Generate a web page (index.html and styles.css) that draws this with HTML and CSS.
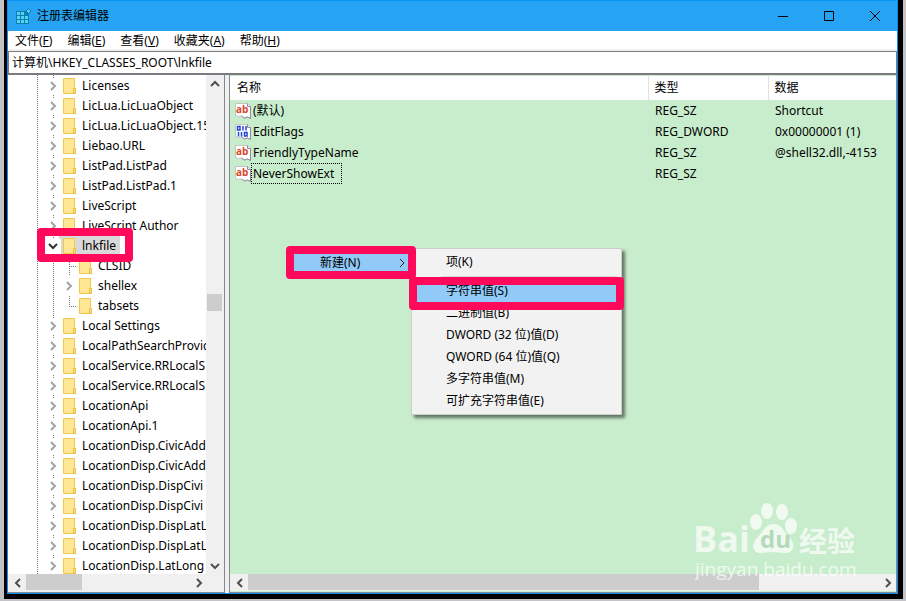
FILE: index.html
```html
<!DOCTYPE html>
<html lang="zh-CN">
<head>
    <meta charset="UTF-8">
    <meta name="viewport" content="width=device-width, initial-scale=1.0">
    <title>注册表编辑器</title>
    <link rel="stylesheet" href="styles.css">
</head>
<body>
    <svg width="0" height="0" class="defs">
        <symbol id="folder" viewBox="0 0 14 17">
            <path d="M.5 .5h11v15H.5z" fill="#ffe694" stroke="#efc94e"/>
            <path d="M10.500 10.500h2v5h-2z" fill="#ffe08a" stroke="#e9bd3d"/>
        </symbol>
        <symbol id="chev" viewBox="0 0 10 10">
            <path d="M3 1l4 4-4 4" fill="none" stroke="currentColor" stroke-width="2"/>
        </symbol>
        <symbol id="page" viewBox="0 0 16 16">
            <path d="M.5 .5h12l3 3v12l-3-1.500-3 1-3-2-3 .5-3-1z" fill="#fff" stroke="#c4c4c4"/>
            <path d="M12.500 .5v3h3v12l-3-1.500-3 1-3-2" fill="none" stroke="#8c8c98"/>
        </symbol>
    </svg>

    <div class="window">
        <header class="titlebar">
            <svg class="app-icon" width="16" height="16" viewBox="0 0 16 16">
                <path d="M0 3h13v13H0z" fill="#117fae"/>
                <path d="M1 4h3v3H1zM5 4h3v3H5zM1 8h3v3H1zM5 8h3v3H5zM9 8h3v3H9zM1 12h3v3H1zM5 12h3v3H5zM9 12h3v3H9z" fill="#55d3f5"/>
                <path d="M12.500 .5l2.500 2.500-2.500 2.500L10 3z" fill="#55c8f0" stroke="#117fae"/>
            </svg>
            <h1>注册表编辑器</h1>
            <button class="win-btn" aria-label="最小化"><svg width="10" height="10"><path d="M0 5.500h10" stroke="#000"/></svg></button>
            <button class="win-btn" aria-label="最大化"><svg width="10" height="10"><path d="M.5 .5h9v9h-9z" fill="none" stroke="#000"/></svg></button>
            <button class="win-btn" aria-label="关闭"><svg width="10" height="10"><path d="M0 0l10 10M10 0L0 10" stroke="#000"/></svg></button>
        </header>

        <nav class="menubar">
            <button>文件(<u>F</u>)</button>
            <button>编辑(<u>E</u>)</button>
            <button>查看(<u>V</u>)</button>
            <button>收藏夹(<u>A</u>)</button>
            <button>帮助(<u>H</u>)</button>
        </nav>

        <input class="address" type="text" aria-label="地址" value="计算机\HKEY_CLASSES_ROOT\lnkfile">

        <main class="split">
            <section class="tree-pane">
                <div class="tree-view">
                    <ul class="tree">
                        <li><button class="toggle" aria-label="展开"><svg><use href="#chev"/></svg></button><svg class="folder"><use href="#folder"/></svg><span>Licenses</span></li>
                        <li><button class="toggle" aria-label="展开"><svg><use href="#chev"/></svg></button><svg class="folder"><use href="#folder"/></svg><span>LicLua.LicLuaObject</span></li>
                        <li><button class="toggle" aria-label="展开"><svg><use href="#chev"/></svg></button><svg class="folder"><use href="#folder"/></svg><span>LicLua.LicLuaObject.15</span></li>
                        <li><button class="toggle" aria-label="展开"><svg><use href="#chev"/></svg></button><svg class="folder"><use href="#folder"/></svg><span>Liebao.URL</span></li>
                        <li><button class="toggle" aria-label="展开"><svg><use href="#chev"/></svg></button><svg class="folder"><use href="#folder"/></svg><span>ListPad.ListPad</span></li>
                        <li><button class="toggle" aria-label="展开"><svg><use href="#chev"/></svg></button><svg class="folder"><use href="#folder"/></svg><span>ListPad.ListPad.1</span></li>
                        <li><button class="toggle" aria-label="展开"><svg><use href="#chev"/></svg></button><svg class="folder"><use href="#folder"/></svg><span>LiveScript</span></li>
                        <li><button class="toggle" aria-label="展开"><svg><use href="#chev"/></svg></button><svg class="folder"><use href="#folder"/></svg><span>LiveScript Author</span></li>
                        <li class="selected"><button class="toggle open" aria-label="折叠"><svg><use href="#chev"/></svg></button><svg class="folder"><use href="#folder"/></svg><span>lnkfile</span><i class="mark mark-key"></i></li>
                        <li class="child"><i class="branch"></i><svg class="folder"><use href="#folder"/></svg><span>CLSID</span></li>
                        <li class="child"><button class="toggle" aria-label="展开"><svg><use href="#chev"/></svg></button><svg class="folder"><use href="#folder"/></svg><span>shellex</span></li>
                        <li class="child"><i class="branch last"></i><svg class="folder"><use href="#folder"/></svg><span>tabsets</span></li>
                        <li><button class="toggle" aria-label="展开"><svg><use href="#chev"/></svg></button><svg class="folder"><use href="#folder"/></svg><span>Local Settings</span></li>
                        <li><button class="toggle" aria-label="展开"><svg><use href="#chev"/></svg></button><svg class="folder"><use href="#folder"/></svg><span>LocalPathSearchProvider</span></li>
                        <li><button class="toggle" aria-label="展开"><svg><use href="#chev"/></svg></button><svg class="folder"><use href="#folder"/></svg><span>LocalService.RRLocalS</span></li>
                        <li><button class="toggle" aria-label="展开"><svg><use href="#chev"/></svg></button><svg class="folder"><use href="#folder"/></svg><span>LocalService.RRLocalS</span></li>
                        <li><button class="toggle" aria-label="展开"><svg><use href="#chev"/></svg></button><svg class="folder"><use href="#folder"/></svg><span>LocationApi</span></li>
                        <li><button class="toggle" aria-label="展开"><svg><use href="#chev"/></svg></button><svg class="folder"><use href="#folder"/></svg><span>LocationApi.1</span></li>
                        <li><button class="toggle" aria-label="展开"><svg><use href="#chev"/></svg></button><svg class="folder"><use href="#folder"/></svg><span>LocationDisp.CivicAdd</span></li>
                        <li><button class="toggle" aria-label="展开"><svg><use href="#chev"/></svg></button><svg class="folder"><use href="#folder"/></svg><span>LocationDisp.CivicAdd</span></li>
                        <li><button class="toggle" aria-label="展开"><svg><use href="#chev"/></svg></button><svg class="folder"><use href="#folder"/></svg><span>LocationDisp.DispCivi</span></li>
                        <li><button class="toggle" aria-label="展开"><svg><use href="#chev"/></svg></button><svg class="folder"><use href="#folder"/></svg><span>LocationDisp.DispCivi</span></li>
                        <li><button class="toggle" aria-label="展开"><svg><use href="#chev"/></svg></button><svg class="folder"><use href="#folder"/></svg><span>LocationDisp.DispLatL</span></li>
                        <li><button class="toggle" aria-label="展开"><svg><use href="#chev"/></svg></button><svg class="folder"><use href="#folder"/></svg><span>LocationDisp.DispLatL</span></li>
                        <li><button class="toggle" aria-label="展开"><svg><use href="#chev"/></svg></button><svg class="folder"><use href="#folder"/></svg><span>LocationDisp.LatLong</span></li>
                    </ul>
                    <div class="vscroll">
                        <button class="up" aria-label="向上"><svg><use href="#chev"/></svg></button>
                        <div class="track"><div class="thumb"></div></div>
                        <button class="down" aria-label="向下"><svg><use href="#chev"/></svg></button>
                    </div>
                </div>
                <div class="hscroll">
                    <button class="left" aria-label="向左"><svg><use href="#chev"/></svg></button>
                    <div class="track"><div class="thumb"></div></div>
                    <button aria-label="向右"><svg><use href="#chev"/></svg></button>
                </div>
            </section>

            <section class="list-pane">
                <div class="list-view">
                    <table>
                        <thead>
                            <tr><th class="col-name">名称</th><th class="col-type">类型</th><th class="col-data">数据</th></tr>
                        </thead>
                        <tbody>
                            <tr>
                                <td><div class="name"><svg width="16" height="16"><use href="#page"/><text class="ab" x="1" y="10">ab</text></svg><span>(默认)</span></div></td>
                                <td>REG_SZ</td><td>Shortcut</td>
                            </tr>
                            <tr>
                                <td><div class="name"><svg width="16" height="16"><use href="#page"/><path d="M2.500 2.500h2.500v3.500H2.500zM8 2v4.500M11 2v4.500M3.500 8v4.500M6.500 8v4.500M9.500 8.500H12V12H9.500z" fill="none" stroke="#2346d8" stroke-width="1.500"/></svg><span>EditFlags</span></div></td>
                                <td>REG_DWORD</td><td>0x00000001 (1)</td>
                            </tr>
                            <tr>
                                <td><div class="name"><svg width="16" height="16"><use href="#page"/><text class="ab" x="1" y="10">ab</text></svg><span>FriendlyTypeName</span></div></td>
                                <td>REG_SZ</td><td>@shell32.dll,-4153</td>
                            </tr>
                            <tr>
                                <td><div class="name"><svg width="16" height="16"><use href="#page"/><text class="ab" x="1" y="10">ab</text></svg><span class="focused">NeverShowExt</span></div></td>
                                <td>REG_SZ</td><td></td>
                            </tr>
                        </tbody>
                    </table>
                </div>
                <div class="hscroll">
                    <button class="left" aria-label="向左"><svg><use href="#chev"/></svg></button>
                    <div class="track"><div class="thumb"></div></div>
                    <button aria-label="向右"><svg><use href="#chev"/></svg></button>
                </div>

                <div class="submenu">
                    <button>项(K)</button>
                    <hr>
                    <button class="active">字符串值(S)<i class="mark mark-string"></i></button>
                    <button>二进制值(B)</button>
                    <button>DWORD (32 位)值(D)</button>
                    <button>QWORD (64 位)值(Q)</button>
                    <button>多字符串值(M)</button>
                    <button>可扩充字符串值(E)</button>
                </div>
                <button class="new-item mark">新建(N)<svg width="8" height="8" viewBox="0 0 8 8"><path d="M2 0l4 4-4 4" fill="none" stroke="#222"/></svg></button>

                <svg class="watermark" width="166" height="80" viewBox="0 0 166 80">
                    <text class="wm-bai" x="-2" y="50">Bai</text>
                    <ellipse cx="61" cy="20" rx="6" ry="8"/>
                    <ellipse cx="72" cy="9" rx="6" ry="8"/>
                    <ellipse cx="87" cy="10" rx="6" ry="8"/>
                    <ellipse cx="96" cy="24" rx="6" ry="8"/>
                    <path d="M79 22c8 0 9 7 14 12 8 7 7 17-3 17-5 0-7-1-12-1s-8 1-12 1c-9 0-10-9-4-15s8-14 17-14z"/>
                    <text class="wm-du" x="65" y="46">du</text>
                    <text class="wm-cn" x="104" y="50">经验</text>
                    <text class="wm-url" x="0" y="74">jingyan.baidu.com</text>
                </svg>
            </section>
        </main>
    </div>
</body>
</html>
```
FILE: styles.css
```css
* { box-sizing: border-box; }
body {
    margin: 0;
    height: 100vh;
    padding: 0 3px 2px 4px;
    background: #c3c3c6;
    font: 12px/20px "Noto Sans", "Noto Sans CJK SC", sans-serif;
    color: #000;
    overflow: hidden;
}
button { border: 0; padding: 0; margin: 0; background: none; font: inherit; color: inherit; }
.defs { position: absolute; }

.window {
    height: 100%;
    display: flex;
    flex-direction: column;
    background: #f0f0f0;
    border: solid #000;
    border-width: 0 5px 5px 3px;
    box-shadow: inset 0 0 0 1px #0a8ff0;
    padding: 0 1px 1px;
}

/* title */
.titlebar {
    display: flex;
    align-items: center;
    flex: 0 0 31px;
    padding-left: 8px;
    background: #26a4f3;
    border-top: 1px solid #0795fa;
}
.titlebar h1 { flex: 1; margin: 0 0 0 5px; font-size: 12px; font-weight: normal; }
.win-btn { width: 46px; height: 30px; display: flex; align-items: center; justify-content: center; }
.win-btn svg { display: block; }
.win-btn:last-child { width: 45px; }

.menubar { display: flex; gap: 15px; flex: 0 0 18px; min-height: 0; background: #fff; padding-left: 7px; }
.menubar button { line-height: 20px; }

.address {
    flex: 0 0 24px;
    width: 100%;
    margin-top: 2px;
    padding: 0 3px;
    border: 1px solid #7a7a80;
    border-bottom-width: 2px;
    border-radius: 0;
    background: #fff;
    font: inherit;
}

.split { flex: 1; min-height: 0; display: flex; gap: 4px; }

/* tree */
.tree-pane {
    flex: 0 0 217px;
    min-width: 0;
    display: flex;
    flex-direction: column;
    border-right: 1px solid #828790;
    border-bottom: 1px solid #828790;
    padding: 0 1px 1px 0;
}
.tree-view { flex: 1; min-width: 0; min-height: 0; display: flex; background: #fff; }
.tree {
    flex: 1;
    min-width: 0;
    margin: 0;
    padding: 1px 0 0 37px;
    list-style: none;
    overflow: hidden;
    background:
        repeating-linear-gradient(#777 0 1px, transparent 1px 2px) 29px 0 / 1px 100% no-repeat,
        repeating-linear-gradient(#777 0 1px, transparent 1px 2px) 45px 0 / 1px 100% no-repeat;
}
.tree li { position: relative; display: flex; align-items: center; height: 20px; white-space: nowrap; }
.toggle { flex: 0 0 16px; height: 15px; display: flex; align-items: center; justify-content: center; background: #fff; color: #a3a3a3; }
.toggle svg { width: 10px; height: 10px; }
.toggle.open { color: #333; }
.toggle.open svg { transform: rotate(90deg); }
.folder { flex: 0 0 14px; height: 17px; margin: 0 5px 0 2px; }
.tree .child { padding-left: 16px; }
.branch {
    flex: 0 0 16px;
    height: 20px;
    background:
        repeating-linear-gradient(#777 0 1px, transparent 1px 2px) 8px 0 / 1px 100% no-repeat,
        repeating-linear-gradient(90deg, #777 0 1px, transparent 1px 2px) 8px 10px / 8px 1px no-repeat;
}
.branch.last {
    background:
        repeating-linear-gradient(#777 0 1px, transparent 1px 2px) 8px 0 / 1px 10px no-repeat,
        repeating-linear-gradient(90deg, #777 0 1px, transparent 1px 2px) 8px 10px / 8px 1px no-repeat;
}
.selected { background: linear-gradient(#d9d9d9, #d9d9d9) 14px 0 / 61px 20px no-repeat; }

/* red frames */
.mark { border: 8px solid #ff0a5a; border-radius: 4px; }
.mark-key { position: absolute; left: -8px; top: -8px; width: 96px; height: 34px; z-index: 1; }
.mark-string { position: absolute; left: -5px; top: -3px; right: -5px; height: 33px; z-index: 1; }

/* scroll bars */
.vscroll { flex: 0 0 17px; display: flex; flex-direction: column; background: #f0f0f0; }
.vscroll .track { flex: 1; display: grid; grid-template-rows: 202fr 17px 246fr; }
.vscroll .thumb { grid-row: 2; margin-left: 1px; background: #cdcdcd; }
.vscroll button, .hscroll button { flex: 0 0 17px; display: flex; align-items: center; justify-content: center; color: #505050; }
.vscroll button svg, .hscroll button svg { width: 10px; height: 10px; }
.up svg { transform: rotate(-90deg); }
.down svg { transform: rotate(90deg); }
.left svg { transform: rotate(180deg); }
.hscroll { flex: 0 0 17px; display: flex; background: #f0f0f0; padding-left: 1px; }
.hscroll .track { flex: 1; }
.hscroll .thumb { height: 16px; background: #cdcdcd; }
.tree-pane .hscroll .thumb { width: 56px; }
.vscroll .thumb { width: 15px; }
.tree-pane .hscroll { padding-right: 16px; }
.list-pane .hscroll .thumb { width: 81%; }

/* values */
.list-pane {
    position: relative;
    flex: 1;
    min-width: 0;
    display: flex;
    flex-direction: column;
    border: 1px solid #828790;
    border-top: 0;
    padding: 1px 0;
    background: #c8edcc;
}
.list-view { flex: 1; min-height: 0; }
table { width: 100%; border-collapse: collapse; table-layout: fixed; }
th { height: 24px; padding: 0 6px; background: #fff; text-align: left; font-weight: normal; border-left: 1px solid #e2e2e2; }
th:first-child { border-left: 0; padding-left: 7px; }
.col-type { width: 120px; }
.col-data { width: 128px; }
td { height: 21px; padding: 0 0 0 7px; white-space: nowrap; }
td:first-child { padding-left: 5px; }
.name { display: flex; align-items: center; }
.name span { padding: 0 1px; border: 1px solid transparent; line-height: 19px; }
.name .focused { padding-right: 7px; border: 1px dotted #000; }
.ab { font: bold 10px "Open Sans", sans-serif; fill: #d8472b; }

/* context menu */
.submenu {
    position: absolute;
    left: 181px;
    top: 173px;
    width: 211px;
    padding: 2px;
    background: #f2f2f2;
    border: 1px solid #ccc;
    box-shadow: 3px 3px 3px rgba(0, 0, 0, .5);
}
.submenu button { position: relative; display: block; width: 100%; height: 22px; padding-left: 32px; text-align: left; }
.submenu hr { margin: 3px 2px 3px 27px; border: 0; border-top: 1px solid #d7d7d7; }
.submenu .active { background: #91c9f7; }
.new-item {
    position: absolute;
    left: 56px;
    top: 171px;
    width: 130px;
    height: 33px;
    display: flex;
    align-items: center;
    justify-content: space-between;
    padding: 0 2px 0 26px;
    background: #91c9f7;
}

.watermark { position: absolute; right: 35px; bottom: 10px; fill: rgba(255, 255, 255, .72); }
.watermark text { font-family: "Open Sans", "Noto Sans CJK SC", sans-serif; }
.watermark .wm-bai { font-size: 36px; font-weight: bold; }
.watermark .wm-du { font-size: 24px; font-weight: bold; fill: #b5d9ba; }
.watermark .wm-cn { font-size: 28px; font-weight: bold; }
.watermark .wm-url { font-size: 19px; }
```
